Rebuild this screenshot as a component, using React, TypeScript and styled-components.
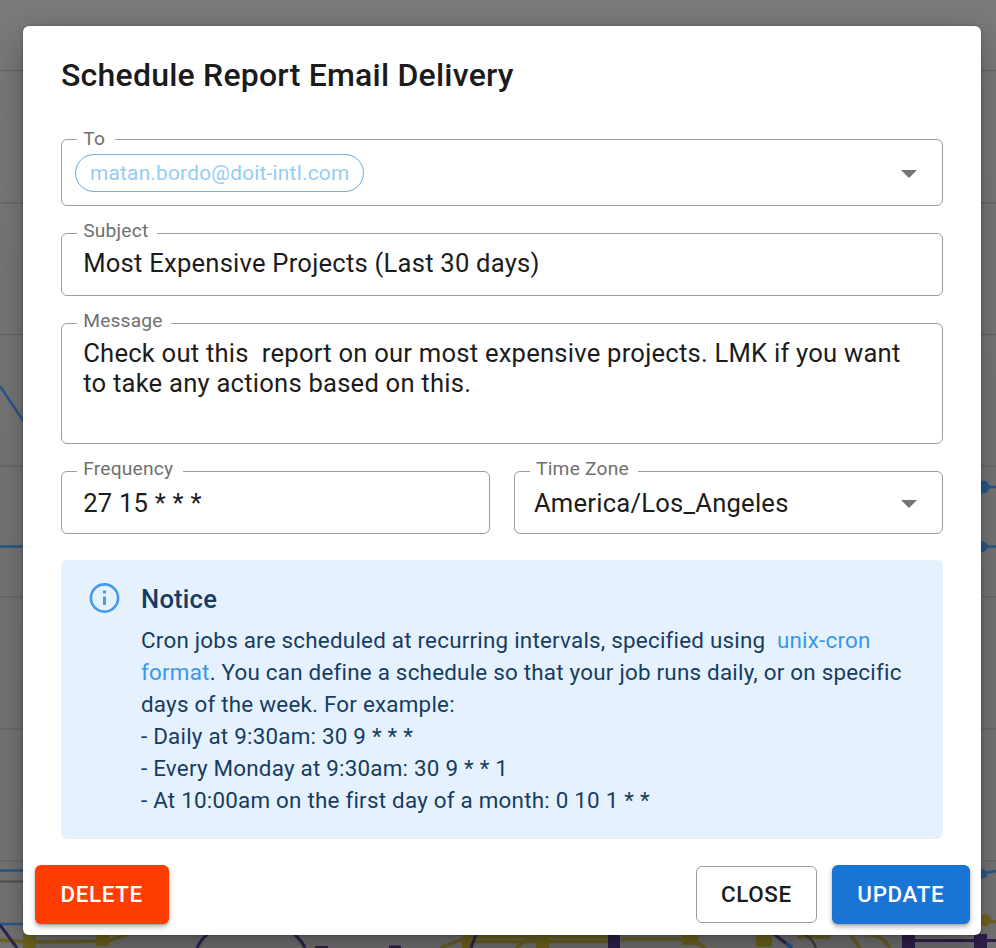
import React from "react";
import styled, { createGlobalStyle } from "styled-components";

const GlobalStyle = createGlobalStyle`
  *, *::before, *::after { box-sizing: border-box; }
  html, body { margin: 0; height: 100%; overflow: hidden; }
  body { font-family: Roboto, "Liberation Sans", sans-serif; background: #767676; }
`;

const Page = styled.main`
  position: relative;
  width: 996px;
  height: 948px;
  overflow: hidden;
  padding: 26.4px 14.6px 0 22.5px;
  background: linear-gradient(#7b7b7b, #767676 40%, #747474);
`;

const Backdrop = styled.svg`
  position: absolute;
  inset: 0;
`;

const Dialog = styled.section`
  position: relative;
  display: flex;
  flex-direction: column;
  height: 909px;
  border-radius: 6px;
  background: #fff;
  box-shadow: 0 14px 20px -6px rgba(0, 0, 0, 0.24), 0 10px 44px 6px rgba(0, 0, 0, 0.16), 0 0 3px rgba(0, 0, 0, 0.3);
`;

const Title = styled.h1`
  margin: 0;
  padding: 24px 38.5px 0;
  height: 112.6px;
  font-size: 32px;
  font-weight: 500;
  line-height: 50px;
  letter-spacing: 0.22px;
  color: #1b1b1d;
`;

const Form = styled.div`
  display: flex;
  flex-direction: column;
  padding: 0 37.9px 0 38.5px;
  margin-right: 0.6px;
`;

const FieldRow = styled.div`
  display: grid;
  grid-template-columns: 429px 429px;
  justify-content: space-between;
`;

const Field = styled.div<{ $height: number; $gap?: number; $inset?: number; $top?: boolean }>`
  position: relative;
  display: flex;
  align-items: ${(p) => (p.$top ? "flex-start" : "center")};
  justify-content: space-between;
  height: ${(p) => p.$height}px;
  margin-bottom: ${(p) => p.$gap ?? 0}px;
  padding: ${(p) => (p.$top ? "14px" : "0")} 20px 0 ${(p) => p.$inset ?? 21.2}px;
  border: 1px solid #9d9d9d;
  border-radius: 6px;
`;

const Label = styled.label<{ $width: number; $lift?: number }>`
  position: absolute;
  top: ${(p) => -13 - (p.$lift ?? 1)}px;
  left: 15px;
  width: ${(p) => p.$width}px;
  padding-left: 6.2px;
  background: #fff;
  font-size: 19.2px;
  line-height: 22px;
  letter-spacing: 0.2px;
  white-space: nowrap;
  color: #707070;
`;

const Value = styled.span<{ $lift?: number; $drop?: number }>`
  padding: ${(p) => p.$drop ?? 0}px 0 ${(p) => p.$lift ?? 0}px;
  font-size: 25.6px;
  line-height: 30px;
  letter-spacing: 0.225px;
  white-space: pre;
  color: #1c1c1c;
`;

const Chip = styled.span`
  display: flex;
  align-items: center;
  height: 38px;
  margin-top: 2px;
  padding: 0 13.5px 0 14px;
  border: 1.6px solid #74b4e8;
  outline: 0.5px solid rgba(116, 180, 232, 0.4);
  outline-offset: -1px;
  border-radius: 19px;
  font-size: 20.8px;
  letter-spacing: 0.24px;
  color: #94cdf3;
`;

const Caret = styled.svg`
  width: 16px;
  height: 8px;
  margin: 3px 4.5px 0 0;
  fill: #747474;
`;

const Notice = styled.aside`
  display: flex;
  height: 279px;
  margin-top: 26.4px;
  padding: 21.6px 28px 0 28px;
  gap: 21px;
  border-radius: 6px;
  background: #e5f2fd;
  color: #173c63;
`;

const InfoIcon = styled.svg`
  flex: none;
  width: 31px;
  height: 32px;
`;

const NoticeBody = styled.div`
  flex: 1;
`;

const NoticeTitle = styled.h2`
  margin: 0 0 8px;
  font-size: 25.6px;
  font-weight: 500;
  line-height: 34px;
  letter-spacing: 0.22px;
`;

const NoticeText = styled.p`
  margin: 0;
  font-size: 22.4px;
  line-height: 32px;
  letter-spacing: 0.225px;
  white-space: pre;
`;

const Link = styled.a`
  color: #3b97e8;
`;

const Actions = styled.footer`
  display: flex;
  align-items: center;
  gap: 15px;
  margin-top: 26px;
  padding: 0 11.6px 0 12.2px;
`;

const Spacer = styled.div`
  flex: 1;
`;

type Tone = "danger" | "outline" | "primary";
const fills: Record<Tone, string> = { danger: "#ff3d00", outline: "#fff", primary: "#1a74d3" };

const Button = styled.button<{ $tone: Tone; $width: number }>`
  width: ${(p) => p.$width}px;
  height: ${(p) => (p.$tone === "outline" ? 57 : 58.5)}px;
  padding: 0 0 1px;
  border: ${(p) => (p.$tone === "outline" ? "1px solid #9d9d9d" : "0")};
  border-radius: 6px;
  background: ${(p) => fills[p.$tone]};
  box-shadow: ${(p) => (p.$tone === "outline" ? "none" : "0 3px 5px rgba(0,0,0,.28), 0 1px 2px rgba(0,0,0,.16)")};
  color: ${(p) => (p.$tone === "outline" ? "#1c1c1c" : "#fff")};
  font-family: inherit;
  font-size: 22.4px;
  font-weight: 500;
  letter-spacing: 0.64px;
`;

const gridLines = [70.5, 203, 334.5, 466, 597, 729, 861];

function Chart() {
  return (
    <Backdrop width="996" height="948" viewBox="0 0 996 948" fill="none">
      {gridLines.map((y) => (
        <path key={y} d={`M0 ${y}H996`} stroke="#686868" strokeWidth="1.3" />
      ))}
      <g stroke="#2a588c" strokeWidth="2.4">
        <path d="M0 386 L24 422 M0 546.5H24 M980 487H996 M980 546.5H996 M0 870.5H24 M0 924H24 M980 874L996 871" />
      </g>
      <g fill="#2a588c">
        <circle cx="983" cy="487" r="6.5" />
        <circle cx="982" cy="546.5" r="5.5" />
        <circle cx="982" cy="874" r="5" />
      </g>
      <path d="M0 881.5H24" stroke="#55504b" strokeWidth="2" />
      <g stroke="#6e6424" strokeWidth="3.5">
        <path d="M0 940L30 942L108 941L128 934M440 948L470 936M472 937H608M472 941.5H608M516 948Q526 938 540 938M621 939H690L706 948M850 934L860 948M866 934Q884 936 890 948M978 919L996 922" />
        <path d="M797 937H830" />
      </g>
      <g fill="#71661f">
        <path d="M23 934h13v14H23zM96 934h13v12H96zM462 934h10v14h-10zM536 934h13v14h-13zM682 934h16v11h-16zM756 934h16v13h-16z" />
        <circle cx="985" cy="920" r="6" />
      </g>
      <path d="M0 925L17 948M197 948Q201 939 208 934M294 934Q302 941 305 948M476 934L471 948M774 934L788 945" stroke="#33244f" strokeWidth="3" />
      <path d="M804 934Q813 939 816 948" stroke="#42414a" strokeWidth="2.5" />
      <path d="M786 943L792 948" stroke="#24588b" strokeWidth="4" />
      <path d="M903 940.5H996" stroke="#33204f" strokeWidth="3" />
      <g fill="#30204d">
        <path d="M608 934h12v14h-12zM902 934h13v14h-13zM974 934h13v14h-13z" />
        <path d="M389 945.5h12v3h-12zM315 946h13v2h-13z" />
      </g>
    </Backdrop>
  );
}

const Arrow = () => (
  <Caret viewBox="0 0 16 8">
    <path d="M0 0H16L8 8Z" />
  </Caret>
);

const noticeLines = [
  "days of the week. For example:",
  "- Daily at 9:30am: 30 9 * * *",
  "- Every Monday at 9:30am: 30 9 * * 1",
  "- At 10:00am on the first day of a month: 0 10 1 * *",
];

export default function App() {
  return (
    <>
      <GlobalStyle />
      <Page>
        <Chart />
        <Dialog>
          <Title>Schedule Report Email Delivery</Title>
          <Form>
            <Field $height={67} $gap={27} $inset={13}>
              <Label $width={38} $lift={-1}>To</Label>
              <Chip>matan.bordo@doit-intl.com</Chip>
              <Arrow />
            </Field>
            <Field $height={63} $gap={27}>
              <Label $width={80}>Subject</Label>
              <Value $lift={2}>Most Expensive Projects (Last 30 days)</Value>
            </Field>
            <Field $height={121} $gap={27} $top>
              <Label $width={94}>Message</Label>
              <Value>{"Check out this  report on our most expensive projects. LMK if you want\nto take any actions based on this."}</Value>
            </Field>
            <FieldRow>
              <Field $height={63}>
                <Label $width={106}>Frequency</Label>
                <Value $drop={1}>27 15 * * *</Value>
              </Field>
              <Field $height={63} $inset={19}>
                <Label $width={108}>Time Zone</Label>
                <Value $drop={1}>America/Los_Angeles</Value>
                <Arrow />
              </Field>
            </FieldRow>
            <Notice>
              <InfoIcon viewBox="0 0 31 32" fill="none" stroke="#459be9">
                <circle cx="15.5" cy="16" r="13.6" strokeWidth="2.6" />
                <path d="M15.5 14.5V23M15.5 8.5V11.4" strokeWidth="3" />
              </InfoIcon>
              <NoticeBody>
                <NoticeTitle>Notice</NoticeTitle>
                <NoticeText>
                  Cron jobs are scheduled at recurring intervals, specified using{"  "}
                  <Link>unix-cron</Link>
                </NoticeText>
                <NoticeText>
                  <Link>format</Link>. You can define a schedule so that your job runs daily, or on specific
                </NoticeText>
                {noticeLines.map((line) => (
                  <NoticeText key={line}>{line}</NoticeText>
                ))}
              </NoticeBody>
            </Notice>
          </Form>
          <Actions>
            <Button $tone="danger" $width={134}>DELETE</Button>
            <Spacer />
            <Button $tone="outline" $width={121}>CLOSE</Button>
            <Button $tone="primary" $width={138}>UPDATE</Button>
          </Actions>
        </Dialog>
      </Page>
    </>
  );
}
